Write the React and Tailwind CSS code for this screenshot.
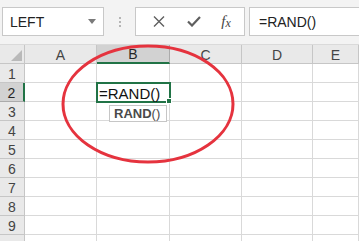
import React from 'react';

// ── Column / row layout ───────────────────────────────────────────────────────
const COLS = ['A', 'B', 'C', 'D', 'E'];
const ROWS = [1, 2, 3, 4, 5, 6, 7, 8, 9, 10];

const HeaderCell = ({ label, active }) => (
  <div
    className={`flex items-center justify-center border-r border-b text-[14px] leading-none ${
      active
        ? 'bg-[#d2d2d2] text-[#262626] border-b-2 border-b-[#217346] border-r-[#ababab]'
        : 'bg-[#e9e9e9] text-[#444] border-[#c6c6c6]'
    }`}
  >
    <span className="pt-[1px]">{label}</span>
  </div>
);

const RowHead = ({ n, active }) => (
  <div
    className={`flex items-center justify-center border-b text-[14px] leading-none ${
      active
        ? 'bg-[#d2d2d2] text-[#262626] border-r-2 border-r-[#217346] border-b-[#ababab]'
        : 'bg-[#e9e9e9] text-[#444] border-r border-[#c6c6c6]'
    }`}
  >
    {/* row 10 only peeks in at the bottom edge, its number is out of view */}
    {n < 10 && <span className="pt-[2px]">{n}</span>}
  </div>
);

const Cell = ({ children }) => (
  <div className="relative border-r border-b border-[#d9d9d9] bg-white">{children}</div>
);

// ── Formula bar ───────────────────────────────────────────────────────────────
const FormulaBar = () => (
  <div className="h-[45px] bg-[#f3f3f3] flex items-start pt-[7px] pl-[2px] border-b border-[#dadada]">
    <div className="w-[102px] h-[29px] bg-white border border-[#c8c8c8] flex items-center pl-[7px] pr-[7px] text-[14px] text-[#222]">
      <span className="flex-1 pt-[1px]">LEFT</span>
      <svg width="8" height="5" viewBox="0 0 8 5">
        <path d="M0 0h8L4 5z" fill="#7a7a7a" />
      </svg>
    </div>
    <div className="w-[31px] h-[29px] flex flex-col items-center justify-center gap-[2px]">
      <span className="w-[2px] h-[2px] bg-[#b5b5b5]" />
      <span className="w-[2px] h-[2px] bg-[#b5b5b5]" />
      <span className="w-[2px] h-[2px] bg-[#b5b5b5]" />
    </div>
    <div className="w-[110px] h-[29px] bg-white border border-[#c8c8c8] flex items-center">
      <div className="w-[38px] flex justify-center pl-[8px]">
        <svg width="12" height="11" viewBox="0 0 12 11">
          <path d="M1 0.5l10 10M11 0.5l-10 10" stroke="#5f5f5f" strokeWidth="1.4" fill="none" />
        </svg>
      </div>
      <div className="w-[36px] flex justify-center pl-[4px]">
        <svg width="14" height="11" viewBox="0 0 14 11">
          <path d="M1 5.5l4 4L13 1" stroke="#5f5f5f" strokeWidth="2.2" fill="none" />
        </svg>
      </div>
      <div className="flex-1 flex justify-center pr-[2px] font-['Liberation_Serif',serif] italic text-[15px] text-[#444] leading-none">
        <span>f</span>
        <span className="text-[12px] pt-[3px]">x</span>
      </div>
    </div>
    <div className="ml-[4px] flex-1 h-[29px] bg-white border border-r-0 border-[#c8c8c8] flex items-center pl-[9px] text-[14px] text-[#222]">
      <span className="pt-[1px]">=RAND()</span>
    </div>
  </div>
);

// ── Main component ────────────────────────────────────────────────────────────
export default function App() {
  return (
    <div className="relative w-[359px] h-[241px] overflow-hidden bg-white font-['Liberation_Sans',Arial,sans-serif]">
      <FormulaBar />

      <div className="grid grid-cols-[25px_72px_73px_72px_71px_1fr] auto-rows-[19px]">
        {/* corner */}
        <div className="relative bg-[#e9e9e9] border-r border-b border-[#c6c6c6]">
          <svg className="absolute right-[2px] bottom-[2px]" width="11" height="11" viewBox="0 0 11 11">
            <path d="M11 0V11H0z" fill="#b9b9b9" />
          </svg>
        </div>
        {COLS.map((c) => (
          <HeaderCell key={c} label={c} active={c === 'B'} />
        ))}

        {ROWS.map((r) => (
          <React.Fragment key={r}>
            <RowHead n={r} active={r === 2} />
            {COLS.map((c) => (
              <Cell key={c}>
                {r === 2 && c === 'B' && (
                  <>
                    <div className="absolute -left-[1px] -top-[1px] w-[75px] h-[21px] border-2 border-[#217346] z-10" />
                    <div className="absolute -right-[3px] -bottom-[3px] w-[6px] h-[6px] bg-[#217346] border border-white z-20" />
                    <span className="absolute left-[2px] top-[1px] text-[15px] leading-[19px] text-[#111] whitespace-nowrap z-20">
                      =RAND()
                    </span>
                    <div className="absolute left-[12px] top-[22px] w-[58px] h-[17px] bg-white border border-[#c6c6c6] flex items-center pl-[4px] text-[13px] text-[#4a4a4a] leading-none z-20">
                      <span className="font-bold">RAND</span>
                      <span>()</span>
                    </div>
                  </>
                )}
              </Cell>
            ))}
          </React.Fragment>
        ))}
      </div>

      {/* red annotation ellipse */}
      <svg className="absolute inset-0 pointer-events-none z-30" width="359" height="241" viewBox="0 0 359 241">
        <ellipse cx="148" cy="104" rx="85" ry="58" fill="none" stroke="#e5333e" strokeWidth="3" />
      </svg>
    </div>
  );
}
